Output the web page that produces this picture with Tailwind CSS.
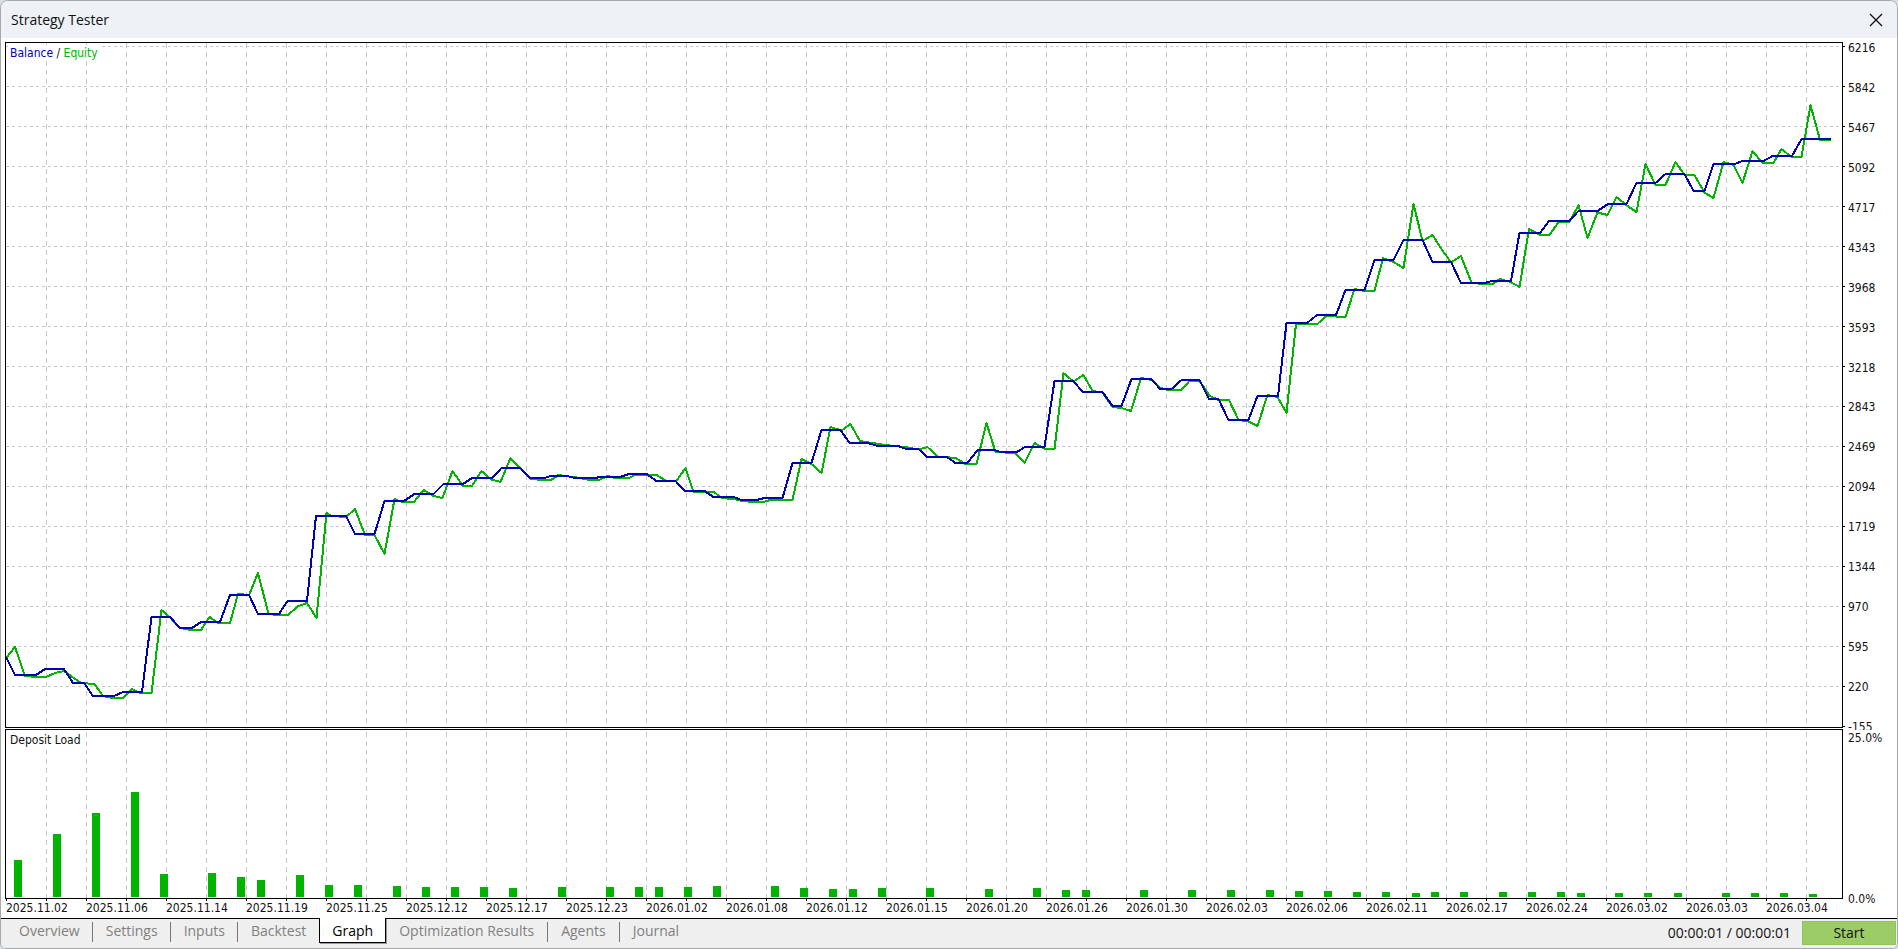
<!DOCTYPE html>
<html lang="en">
<head>
  <meta charset="UTF-8">
  <meta name="viewport" content="width=device-width, initial-scale=1.0">
  <title>Strategy Tester</title>
  <script src="https://cdn.jsdelivr.net/npm/@tailwindcss/browser@4"></script>
</head>
<body class="bg-[#d9dce0] font-['Open_Sans',sans-serif] text-[#111]">
  <div class="min-h-screen flex flex-col bg-white border border-[#a6a8aa] rounded-t-lg rounded-b-md overflow-hidden">
    <!-- Title bar -->
    <header class="h-[37px] shrink-0 flex items-center justify-between pl-[10px] pr-[14px] bg-[#eef2f6]">
      <h1 class="text-sm">Strategy Tester</h1>
      <button aria-label="Close" class="p-0">
        <svg class="w-[14px] h-[14px]" viewBox="0 0 14 14" fill="none" stroke="#111" stroke-width="1.3"><path d="M1 1l12 12M13 1L1 13" /></svg>
      </button>
    </header>

    <!-- Charts -->
    <main class="flex-1 flex flex-col gap-px pt-1 pl-1 text-xs font-['DejaVu_Sans_Condensed','DejaVu_Sans',sans-serif] font-stretch-condensed">
      <section class="flex-1 flex">
        <div class="flex-1 relative">
          <svg id="balanceChart" class="absolute inset-0 w-full h-full overflow-visible" viewBox="5 42 1838 686" preserveAspectRatio="none" fill="none">
            <path id="mainRows" stroke="#c8c8c8" stroke-dasharray="3 3" shape-rendering="crispEdges" />
            <path id="mainCols" stroke="#c8c8c8" stroke-dasharray="5 4" shape-rendering="crispEdges" />
            <path id="mainTicks" stroke="#000" shape-rendering="crispEdges" />
            <polyline id="equityLine" stroke="#00b400" stroke-width="2" stroke-linejoin="round" shape-rendering="crispEdges" />
            <polyline id="balanceLine" stroke="#0000b4" stroke-width="2" stroke-linejoin="round" shape-rendering="crispEdges" />
          </svg>
          <div class="absolute inset-0 border border-black"></div>
          <p class="absolute left-[3px] top-[3px] bg-white px-[2px] leading-4"><span class="text-[#0000b4]">Balance</span> / <span class="text-[#00b400]">Equity</span></p>
        </div>
        <div class="w-[54px] -mt-1 -mb-[2px] overflow-hidden relative">
          <div id="priceAxis" class="absolute left-[5px] top-px -bottom-[6px] flex flex-col justify-between"></div>
        </div>
      </section>
      <section class="h-[170px] flex">
        <div class="flex-1 relative">
          <svg id="loadChart" class="absolute inset-0 w-full h-full overflow-visible" viewBox="5 729 1838 170" preserveAspectRatio="none" fill="none">
            <path id="loadCols" stroke="#c8c8c8" stroke-dasharray="5 4" shape-rendering="crispEdges" />
            <path id="loadTicks" stroke="#000" shape-rendering="crispEdges" />
            <g id="loadBars" fill="#00b400"></g>
          </svg>
          <div class="absolute inset-0 border border-black"></div>
          <p class="absolute left-[3px] top-[3px] bg-white px-[2px] leading-4">Deposit Load</p>
        </div>
        <div class="w-[54px] pl-[5px] pt-px -mb-2 flex flex-col justify-between leading-4">
          <span>25.0%</span>
          <span>0.0%</span>
        </div>
      </section>
      <div id="dateAxis" class="h-[18px] mr-[52px] flex leading-4"></div>
    </main>

    <!-- Tabs -->
    <footer class="h-[30px] shrink-0 flex items-start justify-between bg-[#efefef] text-sm text-[#808080]">
      <nav class="flex-1 h-full flex items-start">
        <div class="h-full flex items-start pt-[3px] pl-[5px] border-t border-black">
          <button class="pl-[13px] pr-3 h-5 pb-[2px] leading-[18px] border-r border-[#777]">Overview</button>
          <button class="pl-[13px] pr-3 h-5 pb-[2px] leading-[18px] border-r border-[#777]">Settings</button>
          <button class="pl-[13px] pr-3 h-5 pb-[2px] leading-[18px] border-r border-[#777]">Inputs</button>
          <button class="px-[13px] h-5 pb-[2px] leading-[18px]">Backtest</button>
        </div>
        <button class="h-[25px] px-3 pt-[3px] pb-px leading-5 bg-white border border-t-0 border-black text-black shadow-[1px_1px_0_#999]">Graph</button>
        <div class="flex-1 h-full flex items-start pt-[3px] border-t border-black">
          <button class="px-[13px] h-5 pb-[2px] leading-[18px] border-r border-[#777]">Optimization Results</button>
          <button class="px-[13px] h-5 pb-[2px] leading-[18px] border-r border-[#777]">Agents</button>
          <button class="px-[13px] h-5 pb-[2px] leading-[18px]">Journal</button>
        </div>
      </nav>
      <div class="h-full flex items-start gap-[11px] pt-[2px] pr-px border-t border-black text-[#111]">
        <span class="leading-6">00:00:01 / 00:00:01</span>
        <button class="w-[94px] h-6 leading-5 bg-[#9ccc65] border border-[#8fc558]">Start</button>
      </div>
    </footer>
  </div>

  <script>
    const prices = [6216, 5842, 5467, 5092, 4717, 4343, 3968, 3593, 3218, 2843, 2469, 2094, 1719, 1344, 970, 595, 220, -155];
    const dates = [
      '2025.11.02', '2025.11.06', '2025.11.14', '2025.11.19', '2025.11.25', '2025.12.12', '2025.12.17', '2025.12.23',
      '2026.01.02', '2026.01.08', '2026.01.12', '2026.01.15', '2026.01.20', '2026.01.26', '2026.01.30', '2026.02.03',
      '2026.02.06', '2026.02.11', '2026.02.17', '2026.02.24', '2026.03.02', '2026.03.03', '2026.03.04'
    ];

    // x,y pairs in chart units
    const balance = `6,657 15,675 36,675 45,669 64,669 73,683 84,683 93,696 114,696 123,692 142,692 151.5,617 170,617 180,628
      192,628 201,622 220,622 230,595 249,595 258,614 279,614 287.5,601 307,601 316,516 346,516 355,534 374.5,534 384.5,501
      404,501 414.5,494 433.5,494 443.5,484 463,484 472,478 492.5,478 501.5,468 520.5,468 530,478 544,478 551,476 567,476
      575,478 596,478 599,477 620,477 629,474 646.5,474 656.5,481 675.5,481 685,491 704.5,491 713.5,497 733.5,497 741.5,500
      756.5,500 764.5,498 782.5,498 792.5,463 811.5,463 821.5,430 840.5,430 849.5,443 868,443 877.5,446 898,446 906,449
      918.5,449 927,457 947,457 955.5,463 967.5,463 977.5,450 995,450 1000,452 1017,452 1025,447 1044.5,447 1054.5,381
      1073.5,381 1082.5,392 1102.5,392 1112.5,406 1121.5,406 1131.5,379 1151.5,379 1160,389 1171.5,389 1181.5,380 1199.5,380
      1209,399 1218.5,399 1228.5,420 1248.5,420 1257.5,396 1278,396 1286.5,323 1307,323 1317,315 1336,315 1345.5,290
      1364.5,290 1374.5,260 1393.5,260 1403.5,240 1422.5,240 1432.5,262 1451,262 1461,283 1485,283 1491.5,281 1511,281
      1519.5,233 1540,233 1549,221 1569,221 1578.5,211 1597.5,211 1608,204 1626.5,204 1636.5,183 1655.5,183 1665.5,174
      1684.5,174 1693.5,191 1704.5,191 1713.5,164 1734.5,164 1742.5,161 1763.5,161 1772.5,156 1792,156 1801.5,139 1831,139`;
    const equity = `6,658 15,647 25,676 36,677 46,677 55,673 64,671 73,677.5 81,683 94.5,684 103,696 113,698 123,698 132,689
      140,693 151.5,693 161.5,610 170.5,618 180,628 191,630 201,630 209.5,617 218,623 230,623 238,594 249,595 258,573
      268.5,614 277,615 288,615 297.5,606.5 307,603 316.5,618 326.5,513 331.5,516 346,517 355,509 365,535 374.5,535 384.5,554
      394.5,499 402,502 414,502 423.5,490 433.5,496 442.5,498 452.5,471 463,486 472,486 481.5,471 491.5,479.5 500.5,482
      510.5,458 520.5,469 530,478.5 540,480 551,480 558.5,475 576.5,477.5 590,480 599,480 607.5,476 615,478 629,478 635,475
      656.5,475 666.5,481 676,481.5 685.5,468 693.5,492 714,492 721.5,498 736.5,499.5 741.5,501 753.5,502 763.5,502 770,500
      782.5,500 792.5,500 801.5,459 811.5,464 821.5,473 830.5,427 841.5,430.5 850.5,424 860,441 881.5,444.5 907.5,447.5
      918.5,449.5 927.5,447 937.5,456.5 955.5,458 965.5,464 976.5,464 986.5,423 995.5,452 1015,453 1024.5,463 1034.5,443
      1045,449 1054.5,449 1063.5,373 1073.5,381.5 1083.5,375 1092.5,391 1102.5,392.5 1112.5,407 1121.5,408 1131,411 1141,378
      1151.5,380 1160.5,388 1168.5,390 1181.5,390 1189.5,381 1199.5,381 1210,396 1218.5,400 1229,400 1238.5,420 1248.5,421.5
      1257.5,426 1267.5,395 1277.5,397 1286.5,413 1296,324 1317.5,324 1326,316 1345.5,317 1354.5,289 1364,291 1374.5,291
      1383,258 1393.5,262 1403.5,268 1413.5,204 1422.5,241 1432.5,235 1441.5,249 1451,262.5 1461,256 1471.5,282.5 1481.5,284
      1492.5,284 1500,279 1510.5,282 1519.5,287 1529,229 1540,235 1549.5,235 1558.5,222 1569.5,222 1578.5,205 1587.5,238
      1597.5,212.5 1607.5,215 1616.5,197 1627.5,206 1636.5,212 1645.5,164 1655.5,185 1665.5,185 1675.5,162 1684.5,175
      1694.5,175 1704.5,192.5 1713.5,198 1723.5,162 1733.5,165 1742.5,183 1752.5,151 1762.5,163 1773.5,163 1781.5,149
      1791.5,157 1801.5,157 1810.5,105 1820,140 1831,140`;

    // [x, top] of every load bar, all standing on y = 897
    const load = [
      [14, 860], [53, 834], [92, 813], [131, 792], [160, 874], [208, 873], [237, 877], [257, 880], [296, 875], [325, 885],
      [354, 885], [393, 886], [422, 887], [451, 887], [480, 887], [509, 888], [558, 887], [606, 887], [635, 887], [655, 887],
      [684, 887], [713, 886], [771, 886], [800, 888], [829, 889], [849, 889], [878, 888], [926, 888], [985, 889], [1033, 888],
      [1062, 890], [1082, 890], [1140, 890], [1188, 890], [1227, 890], [1266, 890], [1295, 891], [1324, 891], [1353, 892],
      [1382, 892], [1412, 893], [1431, 892], [1460, 892], [1499, 892], [1528, 892], [1557, 892], [1577, 893], [1615, 893],
      [1644, 893], [1674, 893], [1722, 893], [1751, 893], [1780, 893], [1809, 894]
    ];

    let rows = '', cols = '', mainTicks = '', loadCols = '', loadTicks = 'M6.5 899v2';
    for (let x = 46.5; x < 1842; x += 40) {
      cols += `M${x} 43V729`;
      loadCols += `M${x} 732V898`;
      loadTicks += `M${x} 899v2`;
    }
    for (let y = 46.5; y < 727; y += 40) {
      if (y < 700) rows += `M6 ${y}H1842`;
      mainTicks += `M1843 ${y}h2`;
    }
    document.getElementById('mainRows').setAttribute('d', rows);
    document.getElementById('mainCols').setAttribute('d', cols);
    document.getElementById('mainTicks').setAttribute('d', mainTicks);
    document.getElementById('loadCols').setAttribute('d', loadCols);
    document.getElementById('loadTicks').setAttribute('d', loadTicks);
    document.getElementById('balanceLine').setAttribute('points', balance);
    document.getElementById('equityLine').setAttribute('points', equity);
    document.getElementById('loadBars').innerHTML = load.map(([x, y]) => `<rect x="${x}" y="${y}" width="8" height="${897 - y}" />`).join('');
    document.getElementById('priceAxis').innerHTML = prices.map(p => `<span class="h-[18px] leading-[18px]">${p}</span>`).join('');
    document.getElementById('dateAxis').innerHTML = dates.map(d => `<span class="flex-1 pl-px">${d}</span>`).join('');
  </script>
</body>
</html>
